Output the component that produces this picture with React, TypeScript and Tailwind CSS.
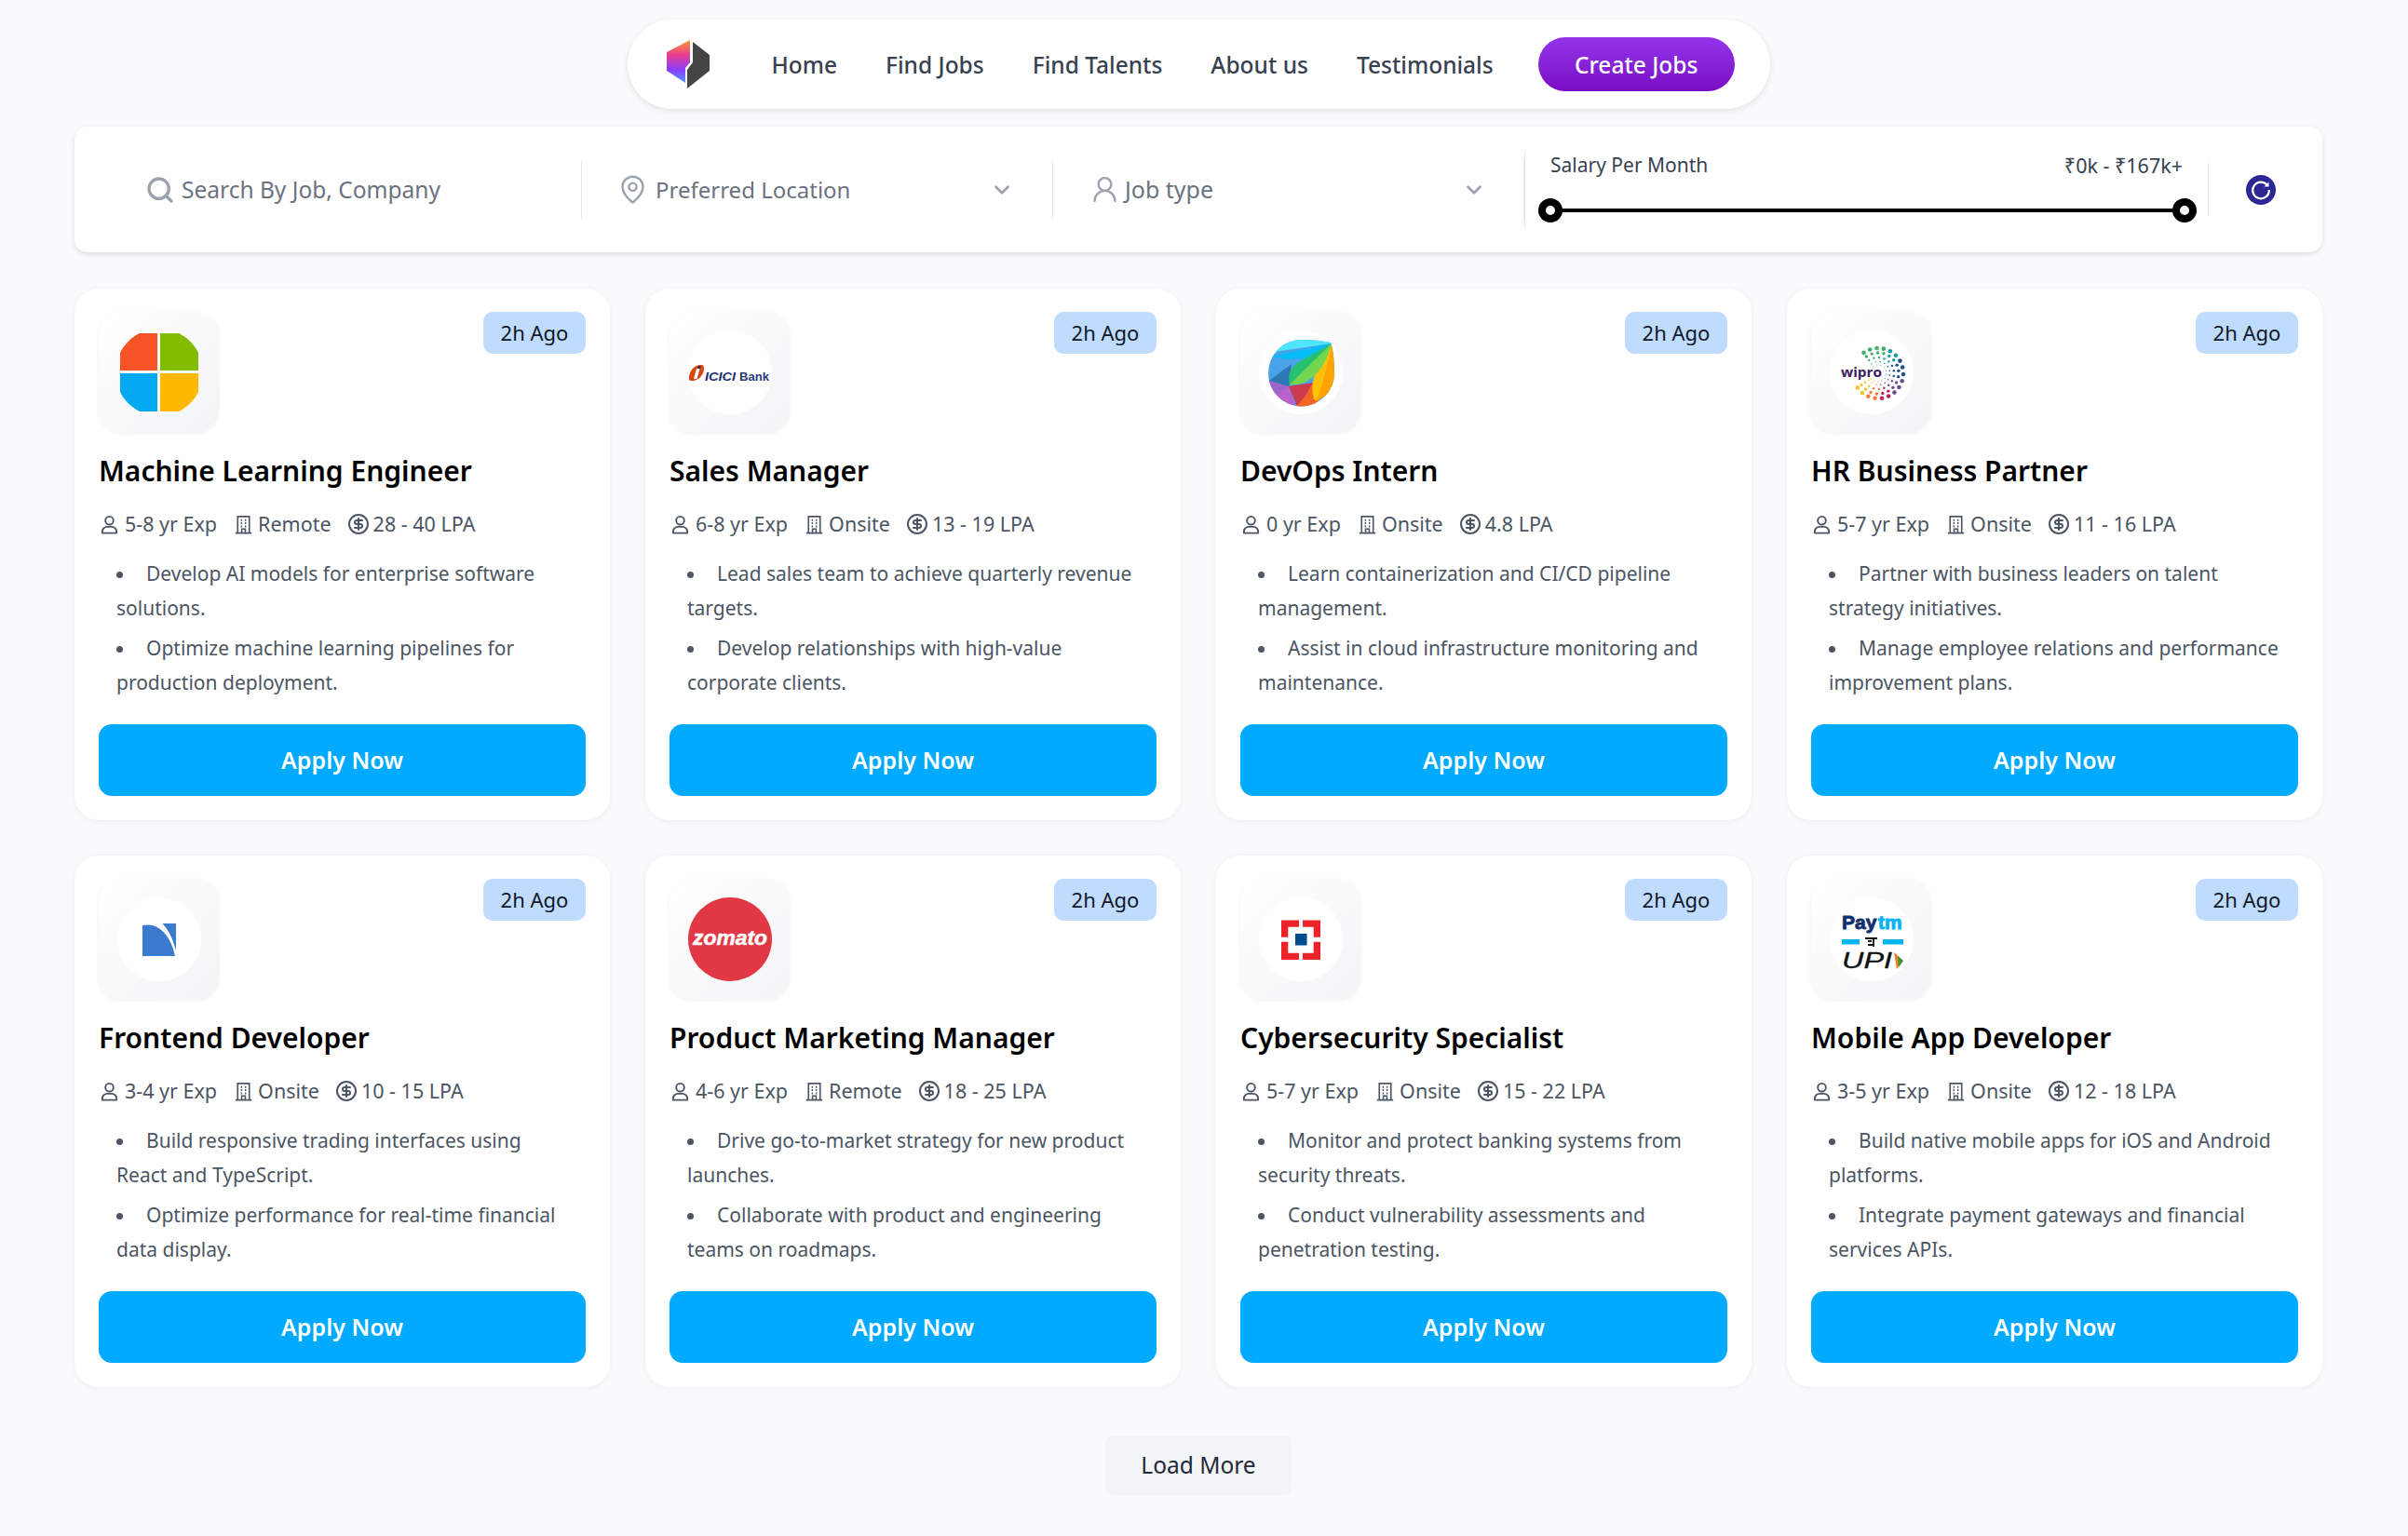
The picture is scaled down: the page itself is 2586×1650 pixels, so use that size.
import { ChevronDown, CircleDollarSign, MapPin, Search, UserRound } from "lucide-react";
import type { ReactNode } from "react";

const MicrosoftLogo = () => (
  <svg viewBox="0 0 90 90" className="w-[90px] h-[90px]">
    <defs>
      <clipPath id="ms-clip">
        <circle cx="45" cy="45" r="47" />
      </clipPath>
    </defs>
    <g clipPath="url(#ms-clip)">
      <rect x="3" y="3" width="40" height="40" fill="#f65427" />
      <rect x="46" y="3" width="41" height="40" fill="#84bd00" />
      <rect x="3" y="46" width="40" height="41" fill="#03a9f0" />
      <rect x="46" y="46" width="41" height="41" fill="#ffb900" />
    </g>
  </svg>
);

const IciciLogo = () => (
  <svg viewBox="0 0 90 90" className="w-[90px] h-[90px]">
    <circle cx="45" cy="45" r="45" fill="#fff" />
    <path d="M1 53 C0 44 7 36 15 37 C19 38 17 48 11 52 C8 54 3 55 1 53Z" fill="#d9480f" />
    <path d="M9 41h3.5l-3 11H6z" fill="#fff" />
    <circle cx="12" cy="39.5" r="1.6" fill="#1b2a6b" />
    <text x="18" y="54" fontFamily="'Liberation Sans', sans-serif" fontWeight="700" fontStyle="italic" fontSize="12" textLength="33" lengthAdjust="spacingAndGlyphs" fill="#1c2c70">ICICI</text>
    <text x="55" y="54" fontFamily="'Liberation Sans', sans-serif" fontWeight="700" fontSize="12" textLength="32" lengthAdjust="spacingAndGlyphs" fill="#2a3b7c">Bank</text>
  </svg>
);

const FreshworksLogo = () => (
  <svg viewBox="0 0 90 90" className="w-[90px] h-[90px]">
    <defs>
      <clipPath id="fw-clip">
        <path d="M46 10 Q64 10 77 13 Q81 24 81 46 A35.5 35.5 0 0 1 10 46 A35.5 35.5 0 0 1 46 10Z" />
      </clipPath>
    </defs>
    <circle cx="45" cy="45" r="45" fill="#fff" />
    <g clipPath="url(#fw-clip)">
      <rect x="0" y="0" width="90" height="90" fill="#4aa3e8" />
      <path d="M8 24 L78 14 L70 4 L30 4 L8 12Z" fill="#4fe6fb" />
      <path d="M12 28 L78 14 L50 30 L32 31Z" fill="#06bcf8" />
      <path d="M8 56 L35 36 L32 62Z" fill="#2d79b8" />
      <path d="M8 53 L32 60 L22 90 L4 80Z" fill="#9e66c8" />
      <path d="M18 70 L32 60 L42 90 L20 90Z" fill="#bb62cd" />
      <path d="M32 60 L58 56 L52 72 L42 84Z" fill="#cd3a4f" />
      <path d="M58 56 L64 76 L44 90 L38 84 L50 70Z" fill="#f26522" />
      <path d="M78 14 L90 20 L88 60 L62 76 L60 56 Q68 40 78 14Z" fill="#ffa400" />
      <path d="M78 14 Q74 40 62 76 L59 74 Q54 56 64 40Z" fill="#ffc107" />
      <path d="M33 58 Q28 40 50 30 L78 14 Q68 32 52 40Z" fill="#27c06e" />
      <path d="M33 58 L78 14 Q72 38 58 50 Q46 60 33 58Z" fill="#74d64e" />
    </g>
  </svg>
);

const wiproRings = [
  { r: 27, count: 18, size: 2.3 },
  { r: 22, count: 17, size: 1.7 },
  { r: 17, count: 15, size: 1.2 },
  { r: 12.5, count: 13, size: 0.8 },
  { r: 9, count: 11, size: 0.5 },
];

function wiproColor(deg: number) {
  if (deg < -70) return "#3fae6a";
  if (deg < -35) return "#149b9b";
  if (deg < 15) return "#1c4f8c";
  if (deg < 50) return "#6a4c93";
  if (deg < 85) return "#c2255c";
  if (deg < 120) return "#ef7d3c";
  return "#f9c22e";
}

const WiproLogo = () => (
  <svg viewBox="0 0 90 90" className="w-[90px] h-[90px]">
    <circle cx="45" cy="45" r="45" fill="#fff" />
    {wiproRings.map((ring) =>
      Array.from({ length: ring.count }).map((_, i) => {
        const deg = -125 + (i * 270) / (ring.count - 1);
        const rad = (deg * Math.PI) / 180;
        return (
          <circle
            key={`${ring.r}-${i}`}
            cx={52 + ring.r * Math.cos(rad)}
            cy={46 + ring.r * Math.sin(rad)}
            r={ring.size}
            fill={wiproColor(deg)}
          />
        );
      })
    )}
    <text x="12" y="50" fontFamily="'Open Sans', sans-serif" fontWeight="700" fontSize="15" textLength="44" lengthAdjust="spacingAndGlyphs" fill="#3b1d5e">wipro</text>
  </svg>
);

const FrontendLogo = () => (
  <svg viewBox="0 0 90 90" className="w-[90px] h-[90px]">
    <circle cx="45" cy="45" r="45" fill="#fff" />
    <path d="M27 30 Q33 29 38 30 Q56 36 62 63 H27Z" fill="#3a7bd0" />
    <path d="M48.5 28 H63 V57 Q58 38 48.5 28Z" fill="#3a7bd0" />
  </svg>
);

const ZomatoLogo = () => (
  <svg viewBox="0 0 90 90" className="w-[90px] h-[90px]">
    <circle cx="45" cy="45" r="45" fill="#e23744" />
    <text x="5" y="51" fontFamily="'Liberation Sans', sans-serif" fontWeight="700" fontStyle="italic" fontSize="22" textLength="80" lengthAdjust="spacingAndGlyphs" fill="#fff" stroke="#fff" strokeWidth="0.5">zomato</text>
  </svg>
);

const HdfcLogo = () => (
  <svg viewBox="0 0 90 90" className="w-[90px] h-[90px]">
    <circle cx="45" cy="45" r="45" fill="#fff" />
    <path d="M24 24.5H43V31.7H31.3V42.7H24Z" fill="#ed232a" />
    <path d="M66 24.5H47V31.7H58.7V42.7H66Z" fill="#ed232a" />
    <path d="M24 67H43V59.8H31.3V47.7H24Z" fill="#ed232a" />
    <path d="M66 67H47V59.8H58.7V47.7H66Z" fill="#ed232a" />
    <rect x="39" y="39" width="12.5" height="12.5" fill="#004c8f" />
  </svg>
);

const PaytmLogo = () => (
  <svg viewBox="0 0 90 90" className="w-[90px] h-[90px]">
    <circle cx="45" cy="45" r="45" fill="#fff" />
    <text x="13" y="34" fontFamily="'Liberation Sans', sans-serif" fontWeight="700" fontSize="21" fill="#0f2f6e" stroke="#0f2f6e" strokeWidth="0.9">Pay</text>
    <text x="52" y="34" fontFamily="'Liberation Sans', sans-serif" fontWeight="700" fontSize="21" fill="#03b4f0" stroke="#03b4f0" strokeWidth="0.9">tm</text>
    <rect x="13" y="45" width="19" height="5.5" fill="#03b4f0" />
    <rect x="57" y="45" width="22" height="5.5" fill="#03b4f0" />
    <path d="M38 44h13M41 47h4M41 51h5M47 44v9" stroke="#111" strokeWidth="1.8" fill="none" />
    <text x="13" y="76" fontFamily="'Liberation Sans', sans-serif" fontStyle="italic" fontSize="24" textLength="54" lengthAdjust="spacingAndGlyphs" fill="#111" stroke="#111" strokeWidth="0.3">UPI</text>
    <path d="M69 59 L79 68 L72 77Z" fill="#ef7d22" />
    <path d="M73 63 L79 68 L74 75Z" fill="#3a9a3a" />
  </svg>
);

const jobs: { title: string; exp: string; mode: string; pay: string; points: string[]; logo: ReactNode }[] = [
  {
    title: "Machine Learning Engineer",
    exp: "5-8 yr Exp",
    mode: "Remote",
    pay: "28 - 40 LPA",
    points: ["Develop AI models for enterprise software solutions.", "Optimize machine learning pipelines for production deployment."],
    logo: <MicrosoftLogo />,
  },
  {
    title: "Sales Manager",
    exp: "6-8 yr Exp",
    mode: "Onsite",
    pay: "13 - 19 LPA",
    points: ["Lead sales team to achieve quarterly revenue targets.", "Develop relationships with high-value corporate clients."],
    logo: <IciciLogo />,
  },
  {
    title: "DevOps Intern",
    exp: "0 yr Exp",
    mode: "Onsite",
    pay: "4.8 LPA",
    points: ["Learn containerization and CI/CD pipeline management.", "Assist in cloud infrastructure monitoring and maintenance."],
    logo: <FreshworksLogo />,
  },
  {
    title: "HR Business Partner",
    exp: "5-7 yr Exp",
    mode: "Onsite",
    pay: "11 - 16 LPA",
    points: ["Partner with business leaders on talent strategy initiatives.", "Manage employee relations and performance improvement plans."],
    logo: <WiproLogo />,
  },
  {
    title: "Frontend Developer",
    exp: "3-4 yr Exp",
    mode: "Onsite",
    pay: "10 - 15 LPA",
    points: ["Build responsive trading interfaces using React and TypeScript.", "Optimize performance for real-time financial data display."],
    logo: <FrontendLogo />,
  },
  {
    title: "Product Marketing Manager",
    exp: "4-6 yr Exp",
    mode: "Remote",
    pay: "18 - 25 LPA",
    points: ["Drive go-to-market strategy for new product launches.", "Collaborate with product and engineering teams on roadmaps."],
    logo: <ZomatoLogo />,
  },
  {
    title: "Cybersecurity Specialist",
    exp: "5-7 yr Exp",
    mode: "Onsite",
    pay: "15 - 22 LPA",
    points: ["Monitor and protect banking systems from security threats.", "Conduct vulnerability assessments and penetration testing."],
    logo: <HdfcLogo />,
  },
  {
    title: "Mobile App Developer",
    exp: "3-5 yr Exp",
    mode: "Onsite",
    pay: "12 - 18 LPA",
    points: ["Build native mobile apps for iOS and Android platforms.", "Integrate payment gateways and financial services APIs."],
    logo: <PaytmLogo />,
  },
];

const PersonIcon = () => (
  <svg viewBox="0 0 24 24" className="w-[23px] h-[23px]" fill="none" stroke="currentColor" strokeWidth="2" strokeLinejoin="round">
    <circle cx="12" cy="7.5" r="4.5" />
    <path d="M4 21.5v-1.5a5.5 5.5 0 0 1 5.5-5.5h5a5.5 5.5 0 0 1 5.5 5.5v1.5z" />
  </svg>
);

const OfficeIcon = () => (
  <svg viewBox="0 0 24 24" className="w-[23px] h-[23px]" fill="none" stroke="currentColor" strokeWidth="1.7">
    <path d="M5.5 21.5V3h13v18.5M3 21.5h18M10 21.5v-4.5h4v4.5" />
    <path d="M9 7h1.5M13.5 7H15M9 10.5h1.5M13.5 10.5H15M9 14h1.5M13.5 14H15" strokeWidth="2" />
  </svg>
);

const JobCard = ({ job }: { job: (typeof jobs)[number] }) => (
  <div className="flex flex-col h-[571px] rounded-[26px] bg-white pt-[25px] px-[26px] pb-[26px] shadow-[0_1px_6px_rgba(0,0,0,0.05)]">
    <div className="flex items-start justify-between">
      <div className="flex items-center justify-center w-[129px] h-[130px] rounded-[24px] bg-gradient-to-br from-white to-[#f3f4f6] shadow-[0_1px_4px_rgba(0,0,0,0.06)]">
        {job.logo}
      </div>
      <span className="flex items-center justify-center w-[110px] h-[45px] rounded-[10px] bg-[#bfdbfe] text-[22px] text-[#111827]">2h Ago</span>
    </div>
    <h2 className="mt-[20px] text-[30px] leading-[42px] font-semibold text-black">{job.title}</h2>
    <div className="mt-[21px] flex items-center h-[30px] gap-[17px] text-[21.5px] text-[#4b5563]">
      <span className="flex items-center gap-[5px]">
        <PersonIcon />
        {job.exp}
      </span>
      <span className="flex items-center gap-[4px]">
        <OfficeIcon />
        {job.mode}
      </span>
      <span className="flex items-center gap-[4px]">
        <CircleDollarSign className="w-[24px] h-[24px]" strokeWidth={2} />
        {job.pay}
      </span>
    </div>
    <ul className="mt-[20px] pl-[19px] pr-[14px] list-disc list-inside flex flex-col gap-[6px] text-[21px] leading-[37px] text-[#4b5563]">
      {job.points.map((point) => (
        <li key={point}>
          <span className="ml-[3px]">{point}</span>
        </li>
      ))}
    </ul>
    <button className="mt-auto h-[77px] rounded-[14px] bg-[#00aaff] text-[25px] font-semibold text-white">Apply Now</button>
  </div>
);

const ResetIcon = () => (
  <svg viewBox="0 0 32 32" className="w-[32px] h-[32px]">
    <circle cx="16" cy="16" r="16" fill="#2c2792" />
    <path d="M22.5 10.5 A8.8 8.8 0 1 0 24.8 16" stroke="#fff" strokeWidth="2.2" fill="none" />
    <path d="M24.5 7.5 V12.5 H19.5Z" fill="#fff" />
  </svg>
);

export default function App() {
  return (
    <div className="min-h-screen bg-[#f9fafb] pl-[80px] pr-[92px] pt-[21px] pb-[42px] font-['Noto_Sans','Open_Sans',sans-serif]">
      <nav className="mx-auto flex items-center w-[1227px] h-[96px] rounded-[48px] bg-white pl-[42px] shadow-[0_2px_6px_rgba(0,0,0,0.1)]">
        <svg viewBox="0 0 46 52" className="w-[46px] h-[52px]">
          <defs>
            <linearGradient id="logo-grad" x1="0" y1="0" x2="0" y2="1">
              <stop offset="0" stopColor="#ff9a2e" />
              <stop offset="0.35" stopColor="#e93d8f" />
              <stop offset="0.7" stopColor="#8b3dff" />
              <stop offset="1" stopColor="#4d9bff" />
            </linearGradient>
          </defs>
          <path d="M25 0 V24 L20 30 V46 L0 33 V13Z" fill="url(#logo-grad)" />
          <path d="M28 2 L46 16 V33 L22 52 V32 L28 24Z" fill="#444" />
        </svg>
        <div className="ml-[67px] pt-[2px] flex items-center gap-[52px] text-[24.5px] font-medium text-[#374151]">
          <span>Home</span>
          <span>Find Jobs</span>
          <span>Find Talents</span>
          <span>About us</span>
          <span>Testimonials</span>
        </div>
        <button className="ml-[48px] w-[211px] h-[58px] pt-[2px] rounded-full bg-gradient-to-b from-[#9333ea] to-[#7a0cc4] text-[24.5px] font-medium text-white">Create Jobs</button>
      </nav>

      <div className="mt-[19px] grid grid-cols-[545px_506px_506px_734px_1fr] items-center h-[135px] rounded-[14px] bg-white shadow-[0_2px_5px_rgba(0,0,0,0.12)]">
        <div className="flex items-center h-[64px] pl-[76px] gap-[7px] text-[24.5px] text-[#6b7280] border-r border-[#e5e7eb]">
          <Search className="w-[32px] h-[32px] text-[#9ca3af]" strokeWidth={2.5} />
          <span className="pt-[2px]">Search By Job, Company</span>
        </div>
        <div className="flex items-center h-[64px] pl-[38px] pr-[41px] gap-[8px] text-[24px] text-[#6b7280] border-r border-[#e5e7eb]">
          <MapPin className="w-[33px] h-[33px] text-[#9ca3af]" strokeWidth={1.75} />
          Preferred Location
          <ChevronDown className="ml-auto w-[26px] h-[26px] text-[#9ca3af]" strokeWidth={2.5} />
        </div>
        <div className="flex items-center h-[64px] pl-[39px] pr-[40px] gap-[5px] text-[25px] text-[#6b7280] border-r border-[#e5e7eb]">
          <UserRound className="w-[33px] h-[33px] text-[#9ca3af]" strokeWidth={1.75} />
          Job type
          <ChevronDown className="ml-auto w-[26px] h-[26px] text-[#9ca3af]" strokeWidth={2.5} />
        </div>
        <div className="h-[83px] px-[14px] border-l border-[#e5e7eb]">
          <div className="flex items-center justify-between pt-[1px] pl-[13px] pr-[13px] h-[31px] text-[21px] text-[#374151]">
            <span>Salary Per Month</span>
            <span className="text-[21.5px]">₹0k - ₹167k+</span>
          </div>
          <div className="relative mt-[31px] ml-[13px] mr-[11px] h-[4px] bg-black">
            <span className="absolute -left-[13px] -top-[11px] w-[26px] h-[26px] rounded-full border-[8px] border-black bg-white" />
            <span className="absolute -right-[13px] -top-[11px] w-[26px] h-[26px] rounded-full border-[8px] border-black bg-white" />
          </div>
        </div>
        <div className="flex items-center h-[57px] pl-[40px] border-l border-[#e5e7eb]">
          <ResetIcon />
        </div>
      </div>

      <div className="mt-[39px] grid grid-cols-4 gap-[38px]">
        {jobs.map((job) => (
          <JobCard key={job.title} job={job} />
        ))}
      </div>

      <div className="mt-[52px] flex justify-center">
        <button className="w-[200px] h-[64px] rounded-[8px] bg-[#f3f4f6] text-[24.5px] text-[#1f2937]">Load More</button>
      </div>
    </div>
  );
}
